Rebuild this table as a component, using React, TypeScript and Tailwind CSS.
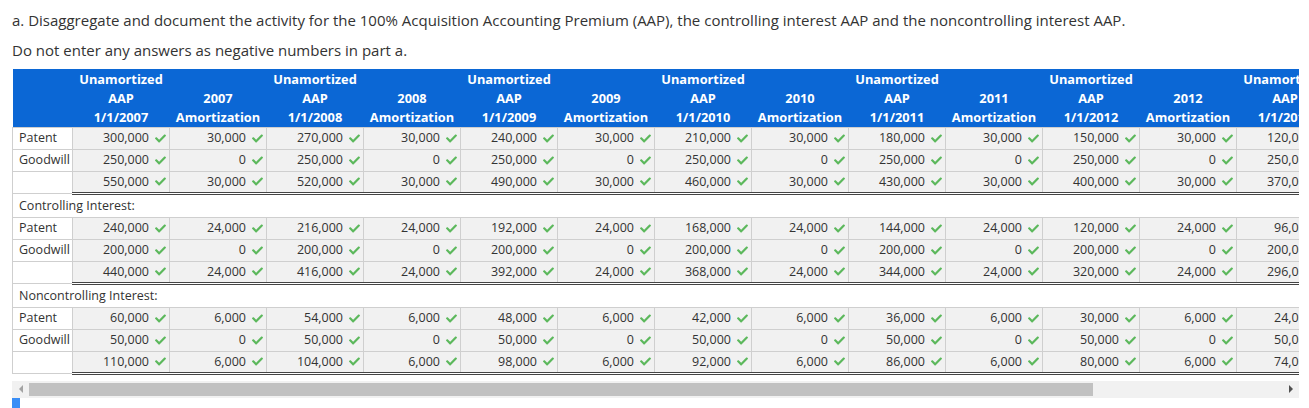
import { Fragment } from 'react';
import { FaCheck } from 'react-icons/fa';

type Section = {
  title?: string;
  patent: number[];
  goodwill: number[];
  total: number[];
};

const years = [2007, 2008, 2009, 2010, 2011, 2012, 2013];

// build 13 values: AAP, amortization, AAP, ... , AAP
const build = (aap: number[], amort: number) => {
  const out: number[] = [];
  aap.forEach((value, index) => {
    out.push(value);
    if (index < aap.length - 1) out.push(amort);
  });
  return out;
};

const sections: Section[] = [
  {
    patent: build([300000, 270000, 240000, 210000, 180000, 150000, 120000], 30000),
    goodwill: build([250000, 250000, 250000, 250000, 250000, 250000, 250000], 0),
    total: build([550000, 520000, 490000, 460000, 430000, 400000, 370000], 30000),
  },
  {
    title: 'Controlling Interest:',
    patent: build([240000, 216000, 192000, 168000, 144000, 120000, 96000], 24000),
    goodwill: build([200000, 200000, 200000, 200000, 200000, 200000, 200000], 0),
    total: build([440000, 416000, 392000, 368000, 344000, 320000, 296000], 24000),
  },
  {
    title: 'Noncontrolling Interest:',
    patent: build([60000, 54000, 48000, 42000, 36000, 30000, 24000], 6000),
    goodwill: build([50000, 50000, 50000, 50000, 50000, 50000, 50000], 0),
    total: build([110000, 104000, 98000, 92000, 86000, 80000, 74000], 6000),
  },
];

const fmt = (n: number) => n.toLocaleString('en-US');

function ValueCell({ value, total }: { value: number; total?: boolean }) {
  return (
    <td
      className={
        total
          ? 'h-[22px] border-x border-x-[#cfcfcf] border-t border-t-[#222] border-b-[3px] border-b-[#444] bg-[#f1f1f1] p-0 pr-[3px]'
          : 'h-[22px] border border-[#cfcfcf] bg-[#f1f1f1] p-0 pr-[3px]'
      }
      style={total ? { borderBottomStyle: 'double' } : undefined}
    >
      <div className="flex items-center justify-end gap-[6px]">
        <span>{fmt(value)}</span>
        <FaCheck className="h-[11px] w-[11px] shrink-0 text-[#5cb85c]" />
      </div>
    </td>
  );
}

function LabelCell({ label }: { label?: string }) {
  return (
    <td className="h-[22px] border border-[#cfcfcf] bg-white p-0 pl-[6px] whitespace-nowrap">
      {label}
    </td>
  );
}

export default function App() {
  return (
    <div className="min-h-[408px] bg-white text-[#333] font-['Open_Sans',sans-serif]">
      <div className="px-[12px] pt-[10px] text-[15px] leading-[20px]">
        <p>
          a. Disaggregate and document the activity for the 100% Acquisition Accounting Premium (AAP), the controlling
          interest AAP and the noncontrolling interest AAP.
        </p>
        <p className="mt-[10px]">Do not enter any answers as negative numbers in part a.</p>
      </div>

      <div className="ml-[12px] mt-[9px] w-[1287px] overflow-hidden">
        <table className="w-[1321px] table-fixed border-collapse text-[12.5px] leading-[16px]">
          <colgroup>
            <col className="w-[60px]" />
            {Array.from({ length: 13 }).map((_, i) => (
              <col key={i} className="w-[97px]" />
            ))}
          </colgroup>
          <thead>
            <tr className="bg-[#0b67d5] text-[12.8px] font-bold leading-[19px] text-white">
              <th className="h-[58px] p-0" />
              {years.map((year, index) => (
                <Fragment key={year}>
                  <th className="h-[58px] p-0 align-bottom text-center whitespace-nowrap">
                    <div>Unamortized</div>
                    <div>AAP</div>
                    <div>1/1/{year}</div>
                  </th>
                  {index < years.length - 1 && (
                    <th className="h-[58px] p-0 align-bottom text-center whitespace-nowrap">
                      <div>{year}</div>
                      <div>Amortization</div>
                    </th>
                  )}
                </Fragment>
              ))}
            </tr>
          </thead>
          <tbody>
            {sections.map((section, s) => (
              <Fragment key={s}>
                {section.title && (
                  <tr>
                    <td colSpan={14} className="h-[24px] border border-[#cfcfcf] bg-white p-0 pl-[6px] whitespace-nowrap">
                      {section.title}
                    </td>
                  </tr>
                )}
                <tr>
                  <LabelCell label="Patent" />
                  {section.patent.map((v, i) => (
                    <ValueCell key={i} value={v} />
                  ))}
                </tr>
                <tr>
                  <LabelCell label="Goodwill" />
                  {section.goodwill.map((v, i) => (
                    <ValueCell key={i} value={v} />
                  ))}
                </tr>
                <tr>
                  <LabelCell />
                  {section.total.map((v, i) => (
                    <ValueCell key={i} value={v} total />
                  ))}
                </tr>
              </Fragment>
            ))}
          </tbody>
        </table>

        {/* scrollbar */}
        <div className="mt-[6px] flex h-[17px] items-center bg-[#f1f1f1]">
          <div className="flex w-[17px] justify-center">
            <div className="h-0 w-0 border-y-[4px] border-r-[4px] border-y-transparent border-r-[#a3a3a3]" />
          </div>
          <div className="h-[13px] w-[1064px] bg-[#c1c1c1]" />
          <div className="flex-1" />
          <div className="flex w-[17px] justify-center">
            <div className="h-0 w-0 border-y-[4px] border-l-[4px] border-y-transparent border-l-[#505050]" />
          </div>
        </div>
      </div>
      <div className="ml-[12px] h-[11px] w-[8px] bg-[#3a8ef6]" />
    </div>
  );
}
